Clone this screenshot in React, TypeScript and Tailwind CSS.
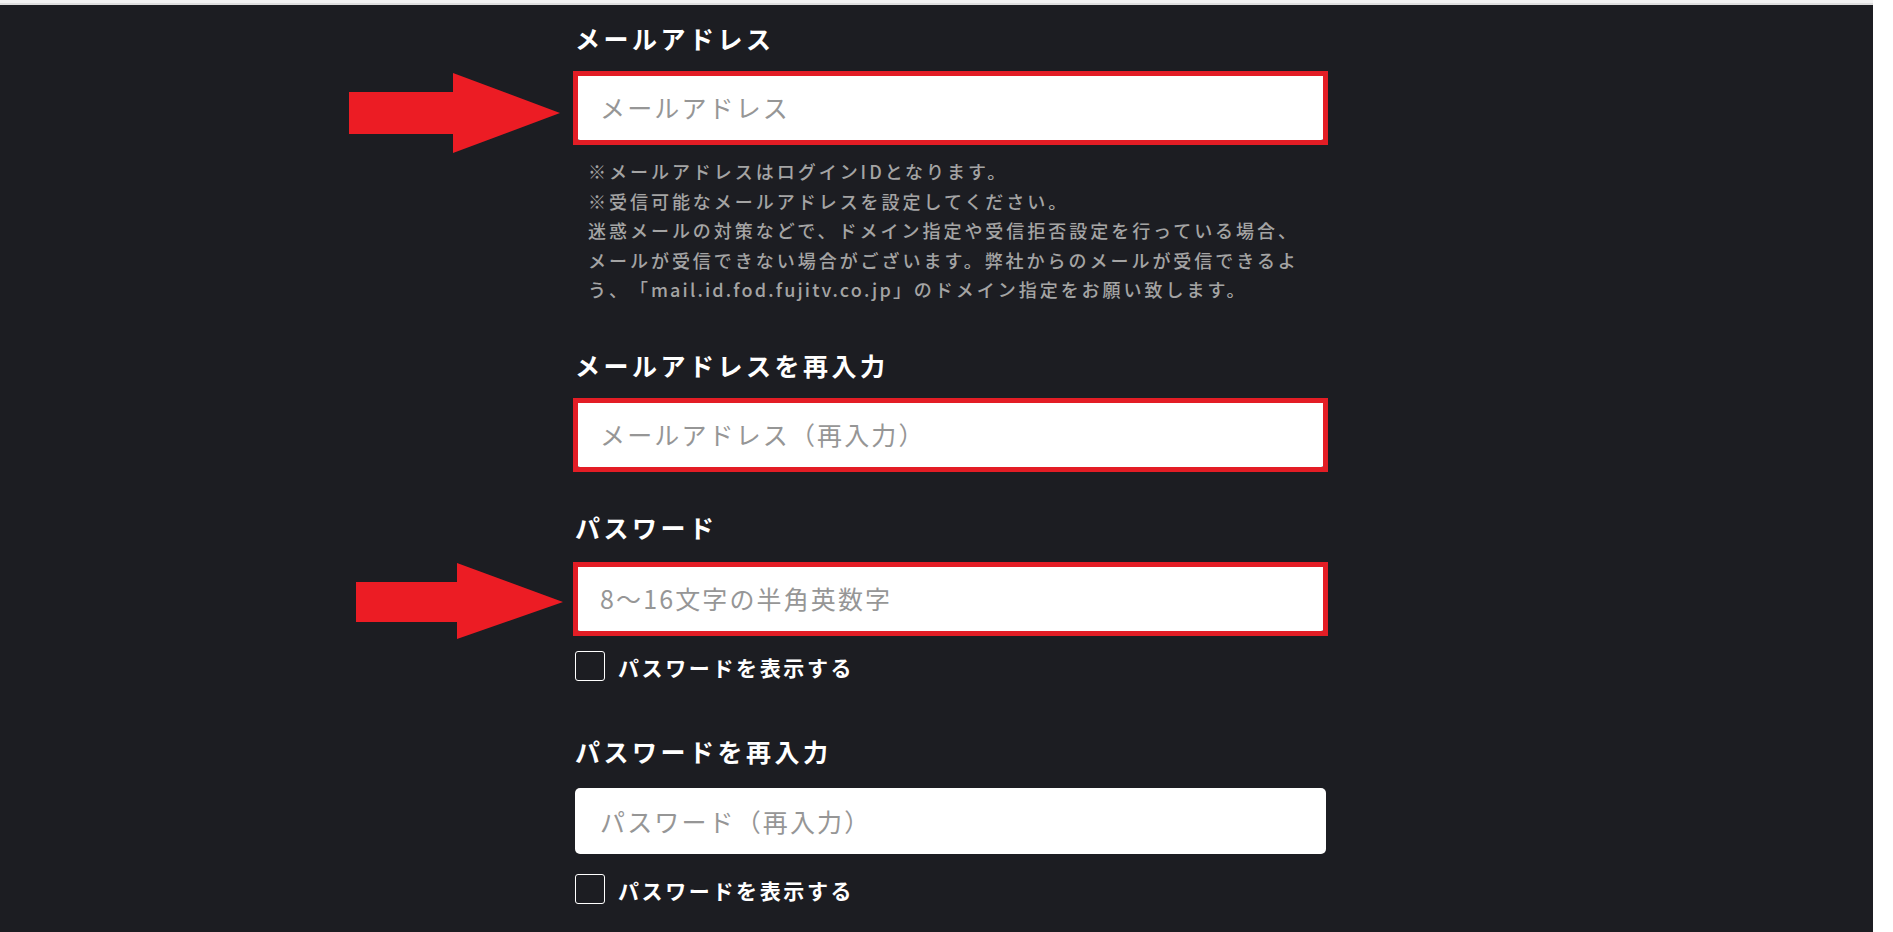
const labelCls = "block text-[25px] font-bold leading-[36px] tracking-[0.14em] text-white";

function Label({ children, className = "" }: { children: React.ReactNode; className?: string }) {
  return <div className={`${labelCls} ${className}`}>{children}</div>;
}

// red annotation box drawn over a marked input
function Mark() {
  return (
    <span className="pointer-events-none absolute top-[-3px] bottom-[-5px] left-[-2px] right-[-2px] border-[5px] border-[#e31d25]" />
  );
}

function Field({ placeholder, type = "text", marked = false }: { placeholder: string; type?: string; marked?: boolean }) {
  return (
    <div className="relative">
      <input
        type={type}
        placeholder={placeholder}
        className="block h-[66px] w-full rounded-[5px] bg-white pl-[25px] text-[25px] tracking-[0.085em] text-[#333] outline-none placeholder:text-[#969696]"
      />
      {marked && <Mark />}
    </div>
  );
}

function ShowPassword() {
  return (
    <label className="mt-[20px] flex h-[30px] items-center gap-[13px]">
      <input type="checkbox" className="h-[30px] w-[30px] appearance-none rounded-[3px] border border-white bg-transparent" />
      <span className="pt-[3px] text-[21px] font-bold leading-none tracking-[0.125em] text-white">パスワードを表示する</span>
    </label>
  );
}

function Arrow({ big = true }: { big?: boolean }) {
  // two slightly different hand-drawn arrows in the screenshot
  if (big) {
    return (
      <svg width="211" height="80" viewBox="0 0 211 80" className="absolute left-[-226px] top-[-1px]">
        <polygon points="0,19 104,19 104,0 211,40 104,80 104,61 0,61" fill="#ec1c24" />
      </svg>
    );
  }
  return (
    <svg width="207" height="76" viewBox="0 0 207 76" className="absolute left-[-219px] top-[-2px]">
      <polygon points="0,19 101,19 101,0 207,39 101,76 101,59 0,59" fill="#ec1c24" />
    </svg>
  );
}

export default function App() {
  return (
    <div className="flex h-[932px] overflow-hidden bg-white font-['Noto_Sans_CJK_JP','Noto_Sans',sans-serif] [text-spacing-trim:space-all]">
      <div className="flex w-[1873px] shrink-0 flex-col bg-[#1c1d22]">
        <div className="h-[3px] bg-[#f2f2f2]" />
        <div className="h-[2px] bg-[#dedede]" />

        <form className="ml-[575px] w-[751px] pt-[15px]">
          {/* メールアドレス */}
          <Label>メールアドレス</Label>
          <div className="relative mt-[18px]">
            <Arrow />
            <Field placeholder="メールアドレス" type="email" marked />
          </div>
          <p className="mt-[17px] whitespace-nowrap pl-[13px] text-[18px] font-medium leading-[29.5px] tracking-[0.165em] text-[#a4a4a4]">
            ※メールアドレスはログインIDとなります。
            <br />
            ※受信可能なメールアドレスを設定してください。
            <br />
            迷惑メールの対策などで、ドメイン指定や受信拒否設定を行っている場合、
            <br />
            メールが受信できない場合がございます。弊社からのメールが受信できるよ
            <br />
            う、「<span className="tracking-[0.12em]">mail.id.fod.fujitv.co.jp</span>」のドメイン指定をお願い致します。
          </p>

          {/* 再入力 */}
          <Label className="mt-[42px]">メールアドレスを再入力</Label>
          <div className="mt-[18px]">
            <Field placeholder="メールアドレス（再入力）" type="email" marked />
          </div>

          {/* パスワード */}
          <Label className="mt-[42px]">パスワード</Label>
          <div className="relative mt-[20px]">
            <Arrow big={false} />
            <Field placeholder="8〜16文字の半角英数字" type="password" marked />
          </div>
          <ShowPassword />

          <Label className="mt-[52px]">パスワードを再入力</Label>
          <div className="mt-[19px]">
            <Field placeholder="パスワード（再入力）" type="password" />
          </div>
          <ShowPassword />
        </form>
      </div>
      <div className="flex-1 bg-white" />
    </div>
  );
}
